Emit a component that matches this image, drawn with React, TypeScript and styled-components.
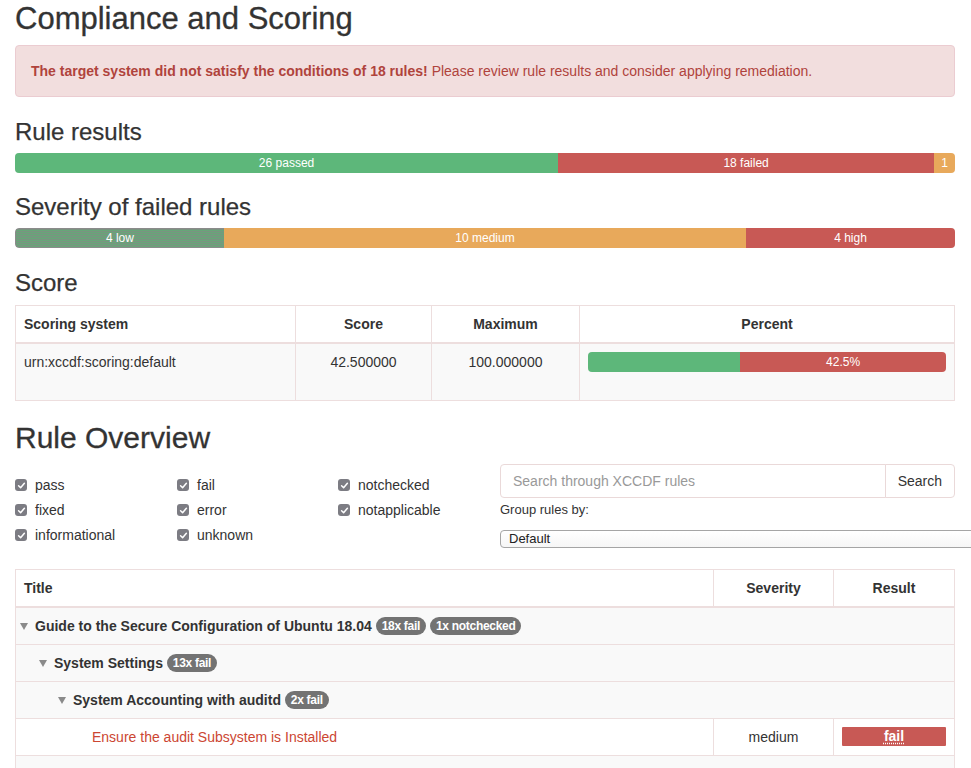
import React from "react";
import styled, { createGlobalStyle } from "styled-components";

const GlobalStyle = createGlobalStyle`
  html, body { margin: 0; padding: 0; overflow: hidden; background: #fff; }
  body {
    font-family: "Liberation Sans", Arial, Helvetica, sans-serif;
    font-size: 14px;
    line-height: 20px;
    color: #333;
  }
  *, *::before, *::after { box-sizing: border-box; }
  ::-webkit-scrollbar { display: none; }
`;

const Page = styled.div`
  width: 971px;
  padding: 0 16px 0 15px;
`;

const PageTitle = styled.h2<{ $top?: number; $size?: number }>`
  margin: ${(p) => p.$top ?? 0}px 0 ${(p) => (p.$size === 31 ? 9 : 10)}px;
  font-size: ${(p) => p.$size ?? 30}px;
  line-height: ${(p) => (p.$size ?? 30) + 3}px;
  font-weight: normal;
  color: #333;
  -webkit-text-stroke: 0.3px #333;
`;

const Alert = styled.div`
  padding: 15px;
  margin-bottom: 22px;
  border: 1px solid #ebccd1;
  border-radius: 4px;
  background: #f2dede;
  color: #b0433c;
`;

const SectionTitle = styled.h3<{ $mb?: number }>`
  margin: 0 0 ${(p) => p.$mb ?? 8}px;
  font-size: 24px;
  line-height: 26px;
  font-weight: normal;
  color: #333;
  -webkit-text-stroke: 0.25px #333;
`;

const Progress = styled.div<{ $mb?: number }>`
  display: flex;
  height: 20px;
  margin-bottom: ${(p) => p.$mb ?? 21}px;
  border-radius: 4px;
  overflow: hidden;
  background: #f5f5f5;
`;

const Segment = styled.div<{ $tone: "success" | "danger" | "warning" | "low" }>`
  height: 20px;
  font-size: 12px;
  line-height: 20px;
  text-align: center;
  color: #fff;
  white-space: nowrap;
  overflow: hidden;
  background: ${(p) =>
    p.$tone === "success"
      ? "#5db77a"
      : p.$tone === "danger"
      ? "#c85955"
      : p.$tone === "warning"
      ? "#e8a95b"
      : "repeating-linear-gradient(0deg, #67a678 0 1px, #7a9381 1px 2px)"};
  ${(p) => (p.$tone === "low" ? "border: 1px solid #8b8b8b; border-right: none; border-radius: 4px 0 0 4px; line-height: 18px;" : "")}
`;

const Table = styled.table<{ $mb?: number }>`
  width: 100%;
  border-collapse: collapse;
  border: 1px solid #eddede;
  margin-bottom: ${(p) => p.$mb ?? 0}px;
`;

const Th = styled.th<{ $align?: string; $w?: number }>`
  padding: 8px;
  border: 1px solid #eddede;
  border-bottom: 2px solid #eddede;
  text-align: ${(p) => p.$align ?? "center"};
  font-weight: bold;
  line-height: 20px;
  ${(p) => (p.$w ? `width: ${p.$w}px;` : "")}
`;

const Td = styled.td<{ $align?: string; $bg?: string }>`
  padding: 8px;
  border: 1px solid #eddede;
  text-align: ${(p) => p.$align ?? "center"};
  vertical-align: top;
  line-height: 20px;
  background: ${(p) => p.$bg ?? "transparent"};
`;

const CellBar = styled(Progress)`
  margin-bottom: 20px;
`;

const OverviewRow = styled.div`
  display: flex;
  justify-content: space-between;
  margin-top: 10px;
`;

const FilterGrid = styled.div`
  display: grid;
  grid-template-columns: 162px 161px 1fr;
  row-gap: 5px;
  width: 485px;
  padding-top: 11px;
  align-content: start;
`;

const FilterItem = styled.label`
  display: flex;
  align-items: center;
  gap: 8px;
  line-height: 20px;
`;

const CheckBox = styled.span`
  display: inline-flex;
  align-items: center;
  justify-content: center;
  width: 12px;
  height: 12px;
  border-radius: 3px;
  background: #7c7c83;
`;

const SearchColumn = styled.div`
  width: 455px;
  display: flex;
  flex-direction: column;
`;

const InputGroup = styled.div`
  display: flex;
  height: 34px;
  margin-bottom: 2px;
`;

const SearchInput = styled.input`
  flex: 1;
  min-width: 0;
  height: 34px;
  padding: 6px 12px;
  border: 1px solid #ead9d9;
  border-radius: 4px 0 0 4px;
  font-family: inherit;
  font-size: 14px;
  color: #555;
  outline: none;
  &::placeholder { color: #999; }
`;

const SearchButton = styled.button`
  height: 34px;
  margin-left: -1px;
  padding: 6px 12px;
  border: 1px solid #ead9d9;
  border-radius: 0 4px 4px 0;
  background: #fff;
  font-family: inherit;
  font-size: 14px;
  color: #333;
`;

const GroupLabel = styled.label`
  display: block;
  font-size: 13px;
  line-height: 20px;
`;

const GroupSelect = styled.select`
  appearance: none;
  -webkit-appearance: none;
  width: 490px;
  height: 18px;
  margin-top: 10px;
  padding: 0 8px;
  border: 1px solid #a5a5a5;
  border-radius: 4px;
  background: linear-gradient(#fff, #f6f6f6);
  font-family: inherit;
  font-size: 13px;
  line-height: 16px;
  color: #222;
`;

const RuleTable = styled(Table)`
  margin-top: 21px;
`;

const GroupCell = styled.td<{ $level: number }>`
  padding: 8px 8px 8px ${(p) => 4 + p.$level * 19}px;
  border: 1px solid #eddede;
  background: #f9f9f9;
  font-weight: bold;
  line-height: 20px;
  white-space: nowrap;
`;

const Expander = styled.span`
  display: inline-block;
  width: 0;
  height: 0;
  margin-right: 7px;
  border-left: 4px solid transparent;
  border-right: 4px solid transparent;
  border-top: 7px solid #8a8a8a;
  vertical-align: 1px;
`;

const Badge = styled.span`
  display: inline-block;
  padding: 3px 6px;
  border-radius: 10px;
  background: #737373;
  color: #fff;
  font-size: 12px;
  font-weight: bold;
  line-height: 12px;
  vertical-align: 1px;
  letter-spacing: -0.3px;
  & + & { margin-left: 4px; }
`;

const RuleTitleCell = styled.td`
  padding: 8px 8px 8px 76px;
  border: 1px solid #eddede;
  color: #cc4632;
  line-height: 20px;
`;

const ResultLabel = styled.span`
  display: block;
  height: 19px;
  border-radius: 1px;
  background: #c85955;
  color: #fff;
  font-weight: bold;
  font-size: 14px;
  line-height: 19px;
  text-align: center;
`;

const Abbr = styled.abbr`
  text-decoration: underline dotted;
  text-underline-offset: 2px;
`;

const Check = () => (
  <svg width="9" height="9" viewBox="0 0 9 9" aria-hidden="true">
    <path d="M1.6 4.8 L3.6 6.7 L7.4 2.2" fill="none" stroke="#fff" strokeWidth="1.5" strokeLinecap="round" strokeLinejoin="round" />
  </svg>
);

const filters = [
  "pass", "fail", "notchecked",
  "fixed", "error", "notapplicable",
  "informational", "unknown",
];

export default function App() {
  const pct = (n: number, total: number) => `${(n / total) * 100}%`;
  return (
    <>
      <GlobalStyle />
      <Page>
        <PageTitle $top={2} $size={31}>Compliance and Scoring</PageTitle>
        <Alert>
          <strong>The target system did not satisfy the conditions of 18 rules!</strong> Please review rule results and consider applying remediation.
        </Alert>

        <SectionTitle>Rule results</SectionTitle>
        <Progress>
          <Segment $tone="success" style={{ width: pct(26, 45) }}>26 passed</Segment>
          <Segment $tone="danger" style={{ width: pct(18, 45) }}>18 failed</Segment>
          <Segment $tone="warning" style={{ width: pct(1, 45) }}>1</Segment>
        </Progress>

        <SectionTitle>Severity of failed rules</SectionTitle>
        <Progress $mb={22}>
          <Segment $tone="low" style={{ width: pct(4, 18) }}>4 low</Segment>
          <Segment $tone="warning" style={{ width: pct(10, 18) }}>10 medium</Segment>
          <Segment $tone="danger" style={{ width: pct(4, 18) }}>4 high</Segment>
        </Progress>

        <SectionTitle $mb={9}>Score</SectionTitle>
        <Table $mb={20}>
          <thead>
            <tr>
              <Th $align="left" $w={280}>Scoring system</Th>
              <Th $w={136}>Score</Th>
              <Th $w={148}>Maximum</Th>
              <Th>Percent</Th>
            </tr>
          </thead>
          <tbody>
            <tr>
              <Td $align="left" $bg="#f9f9f9">urn:xccdf:scoring:default</Td>
              <Td $bg="#f9f9f9">42.500000</Td>
              <Td $bg="#f9f9f9">100.000000</Td>
              <Td $bg="#f9f9f9">
                <CellBar>
                  <Segment $tone="success" style={{ width: "42.5%" }} />
                  <Segment $tone="danger" style={{ width: "57.5%" }}>42.5%</Segment>
                </CellBar>
              </Td>
            </tr>
          </tbody>
        </Table>

        <PageTitle>Rule Overview</PageTitle>
        <OverviewRow>
          <FilterGrid>
            {filters.map((f) => (
              <FilterItem key={f}>
                <CheckBox><Check /></CheckBox>
                {f}
              </FilterItem>
            ))}
          </FilterGrid>
          <SearchColumn>
            <InputGroup>
              <SearchInput placeholder="Search through XCCDF rules" />
              <SearchButton>Search</SearchButton>
            </InputGroup>
            <GroupLabel>Group rules by:</GroupLabel>
            <GroupSelect defaultValue="default">
              <option value="default">Default</option>
            </GroupSelect>
          </SearchColumn>
        </OverviewRow>

        <RuleTable>
          <thead>
            <tr>
              <Th $align="left">Title</Th>
              <Th $w={120}>Severity</Th>
              <Th $w={121}>Result</Th>
            </tr>
          </thead>
          <tbody>
            <tr>
              <GroupCell $level={0} colSpan={3}>
                <Expander />Guide to the Secure Configuration of Ubuntu 18.04 <Badge>18x fail</Badge><Badge>1x notchecked</Badge>
              </GroupCell>
            </tr>
            <tr>
              <GroupCell $level={1} colSpan={3}>
                <Expander />System Settings <Badge>13x fail</Badge>
              </GroupCell>
            </tr>
            <tr>
              <GroupCell $level={2} colSpan={3}>
                <Expander />System Accounting with auditd <Badge>2x fail</Badge>
              </GroupCell>
            </tr>
            <tr>
              <RuleTitleCell>Ensure the audit Subsystem is Installed</RuleTitleCell>
              <Td>medium</Td>
              <Td><ResultLabel><Abbr>fail</Abbr></ResultLabel></Td>
            </tr>
            <tr>
              <GroupCell $level={3} colSpan={3}>&nbsp;</GroupCell>
            </tr>
          </tbody>
        </RuleTable>
      </Page>
    </>
  );
}
